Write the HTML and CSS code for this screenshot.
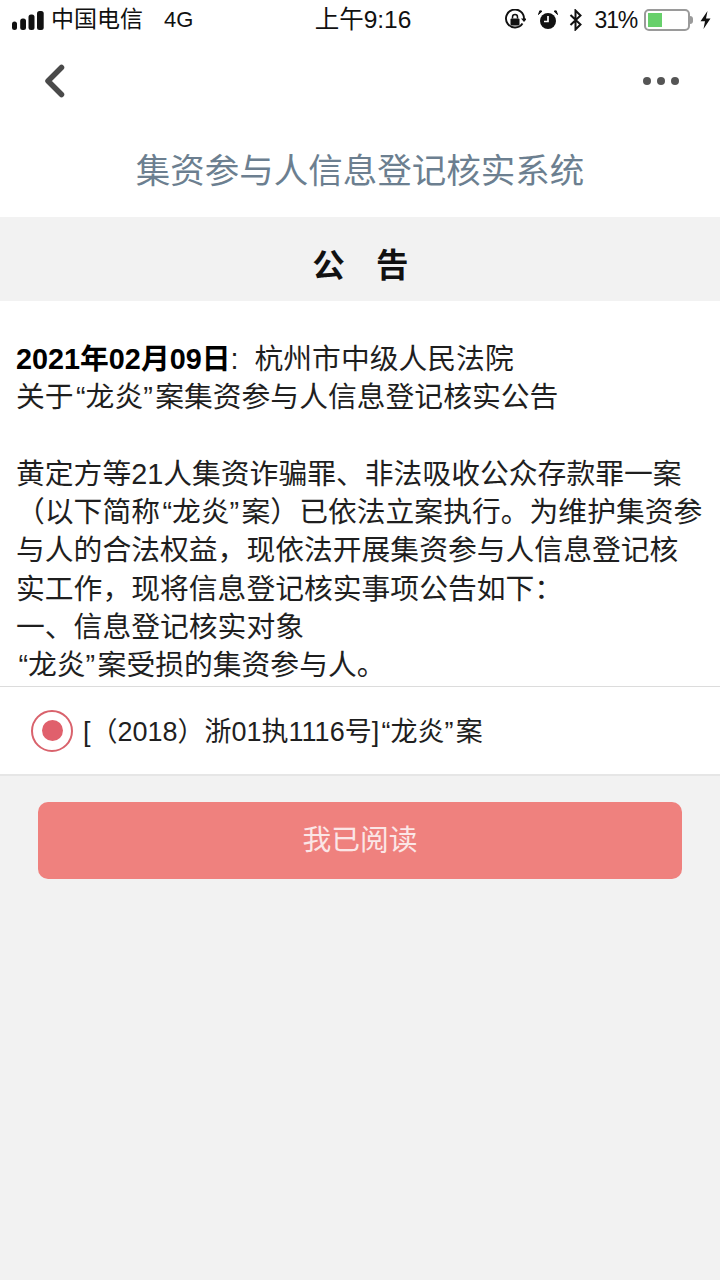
FILE: index.html
```html
<!DOCTYPE html>
<html lang="zh-CN">
<head>
    <meta charset="UTF-8">
    <meta name="viewport" content="width=device-width, initial-scale=1.0">
    <title>集资参与人信息登记核实系统</title>
    <link rel="stylesheet" href="styles.css">
</head>
<body>
    <div class="status-bar">
        <div class="status-left">
            <svg class="signal" width="32" height="19" viewBox="0 0 32 19">
                <rect x="0" y="10.5" width="5" height="8.5" rx="2.5"/>
                <rect x="8.2" y="7.5" width="5.8" height="11.5" rx="2.5"/>
                <rect x="16.5" y="3.5" width="6" height="15.5" rx="2.5"/>
                <rect x="25" y="0" width="6.7" height="19" rx="2.5"/>
            </svg>
            <span class="carrier">中国电信</span>
            <span class="network">4G</span>
        </div>
        <div class="status-time">上午9:16</div>
        <div class="status-right">
            <svg class="lock" width="22" height="22" viewBox="0 0 22 22">
                <path d="M18.5 14.5A9 9 0 1 1 20 10" fill="none" stroke="#111" stroke-width="1.9"/>
                <path d="M17 9.5h6l-3 3.6z" fill="#111"/>
                <rect x="6.5" y="9.5" width="9" height="7" rx="1" fill="#111"/>
                <path d="M8.5 9.5V8a2.5 2.5 0 0 1 5 0v1.5" fill="none" stroke="#111" stroke-width="1.5"/>
            </svg>
            <svg class="alarm" width="20" height="20" viewBox="0 0 20 20">
                <circle cx="10" cy="11" r="8"/>
                <path d="M10 6v5.5H6" fill="none" stroke="#fff" stroke-width="1.7"/>
                <path d="M0.5 4.5L4 1.2 1.8 0.8zM19.5 4.5L16 1.2 18.2 0.8z" stroke="#111"/>
            </svg>
            <svg class="bluetooth" width="14" height="22" viewBox="0 0 14 22">
                <path d="M1.5 6l10 9.5L6.5 20.5V1.5l5 5-10 9.5" fill="none" stroke="#111" stroke-width="2"/>
            </svg>
            <span class="battery-text">31%</span>
            <div class="battery"><div class="battery-level"></div></div>
            <div class="battery-cap"></div>
            <svg class="bolt" width="11" height="18" viewBox="0 0 11 18">
                <path d="M7.5 0L0.5 10.2H5L3.5 18 10.5 7.5H6z" fill="#111"/>
            </svg>
        </div>
    </div>

    <div class="nav-bar">
        <svg class="back" width="24" height="36" viewBox="0 0 24 36">
            <path d="M19.5 4.5L6 18l13.5 13.5" fill="none" stroke="#4a4a4a" stroke-width="5.5" stroke-linecap="round" stroke-linejoin="round"/>
        </svg>
        <div class="more"><i></i><i></i><i></i></div>
    </div>

    <h1 class="title">集资参与人信息登记核实系统</h1>
    <h2 class="notice-head">公　告</h2>

    <div class="notice-body">
        <p><b>2021年02月09日</b>:&nbsp;&nbsp;杭州市中级人民法院</p>
        <p>关于&#8202;“龙炎”&#8202;案集资参与人信息登记核实公告</p>
        <p>&nbsp;</p>
        <p>黄定方等21人集资诈骗罪、非法吸收公众存款罪一案（以下简称&#8202;“龙炎”&#8202;案）已依法立案执行。为维护集资参与人的合法权益，现依法开展集资参与人信息登记核实工作，现将信息登记核实事项公告如下：</p>
        <p>一、信息登记核实对象</p>
        <p>&#8202;“龙炎”&#8202;案受损的集资参与人。</p>
        <p>&nbsp;</p>
    </div>

    <div class="case-row">
        <span class="radio"><span class="radio-dot"></span></span>
        <span class="case-name">[（2018）浙01执1116号]&#8202;“龙炎”&#8202;案</span>
    </div>

    <button class="read-btn">我已阅读</button>
</body>
</html>
```

FILE: styles.css
```css
* {
    box-sizing: border-box;
}
body {
    margin: 0;
    min-height: 1280px;
    background: #f2f2f2;
    color: #1f1f1f;
    font-family: "Liberation Sans", "Noto Sans CJK SC", sans-serif;
    text-spacing-trim: space-all;
}
.status-bar {
    height: 42px;
    background: #fff;
    display: flex;
    align-items: center;
    justify-content: space-between;
    padding: 0 9px 2px 12px;
    position: relative;
    color: #111;
}
.status-left {
    display: flex;
    align-items: center;
}
.signal {
    fill: #111;
    margin-right: 7px;
}
.carrier {
    font-size: 23px;
    line-height: 28px;
    margin-top: -2px;
}
.network {
    font-size: 22px;
    margin-left: 21px;
}
.status-time {
    position: absolute;
    left: 6px;
    right: 0;
    top: 4px;
    text-align: center;
    font-size: 24.5px;
    line-height: 32px;
}
.status-right {
    display: flex;
    align-items: center;
}
.alarm {
    margin-left: 12px;
    fill: #111;
}
.bluetooth {
    margin-left: 11px;
}
.battery-text {
    font-size: 23px;
    letter-spacing: -1.2px;
    margin-left: 12px;
}
.battery {
    width: 46px;
    height: 22px;
    margin-left: 7px;
    border: 2px solid #9a9a9a;
    border-radius: 5px;
    padding: 2px;
    background: #fff;
}
.battery-level {
    width: 14px;
    height: 100%;
    background: #67d06b;
}
.battery-cap {
    width: 3px;
    height: 8px;
    background: #9a9a9a;
    border-radius: 0 3px 3px 0;
}
.bolt {
    margin-left: 7px;
}
.nav-bar {
    height: 88px;
    background: #fff;
    display: flex;
    align-items: center;
    justify-content: space-between;
    padding: 0 41px 10px 42px;
}
.more {
    display: flex;
    gap: 6px;
}
.more i {
    width: 8px;
    height: 8px;
    border-radius: 50%;
    background: #555;
}
.title {
    margin: 0;
    height: 87px;
    padding-bottom: 11px;
    background: #fff;
    color: #6c7f90;
    font-size: 34.5px;
    font-weight: 400;
    display: flex;
    align-items: center;
    justify-content: center;
}
.notice-head {
    margin: 0;
    height: 84px;
    padding-top: 6px;
    display: flex;
    align-items: center;
    justify-content: center;
    color: #111;
    font-size: 32.5px;
    font-weight: 700;
    letter-spacing: -0.6px;
}
.notice-body {
    height: 385px;
    overflow: hidden;
    background: #fff;
    padding: 39px 16px 0;
    font-size: 28.8px;
    line-height: 38.3px;
}
.notice-body p {
    margin: 0;
}
.notice-body b {
    color: #000;
}
.case-row {
    height: 90px;
    background: #fff;
    border-top: 1px solid #dcdcdc;
    border-bottom: 2px solid #e6e6e6;
    display: flex;
    align-items: center;
    padding: 0 0 2px 31px;
}
.radio {
    width: 42px;
    height: 42px;
    margin-top: 2px;
    border: 2px solid #d9626c;
    border-radius: 50%;
    display: flex;
    align-items: center;
    justify-content: center;
}
.radio-dot {
    width: 21px;
    height: 21px;
    border-radius: 50%;
    background: #e0606c;
}
.case-name {
    margin-left: 10px;
    font-size: 27px;
}
.read-btn {
    display: block;
    width: 644px;
    height: 77px;
    margin: 26px 0 0 38px;
    padding: 0 0 6px;
    border: none;
    border-radius: 10px;
    background: #ef817e;
    color: #fbe6e6;
    font-family: inherit;
    font-size: 28.8px;
}
```
